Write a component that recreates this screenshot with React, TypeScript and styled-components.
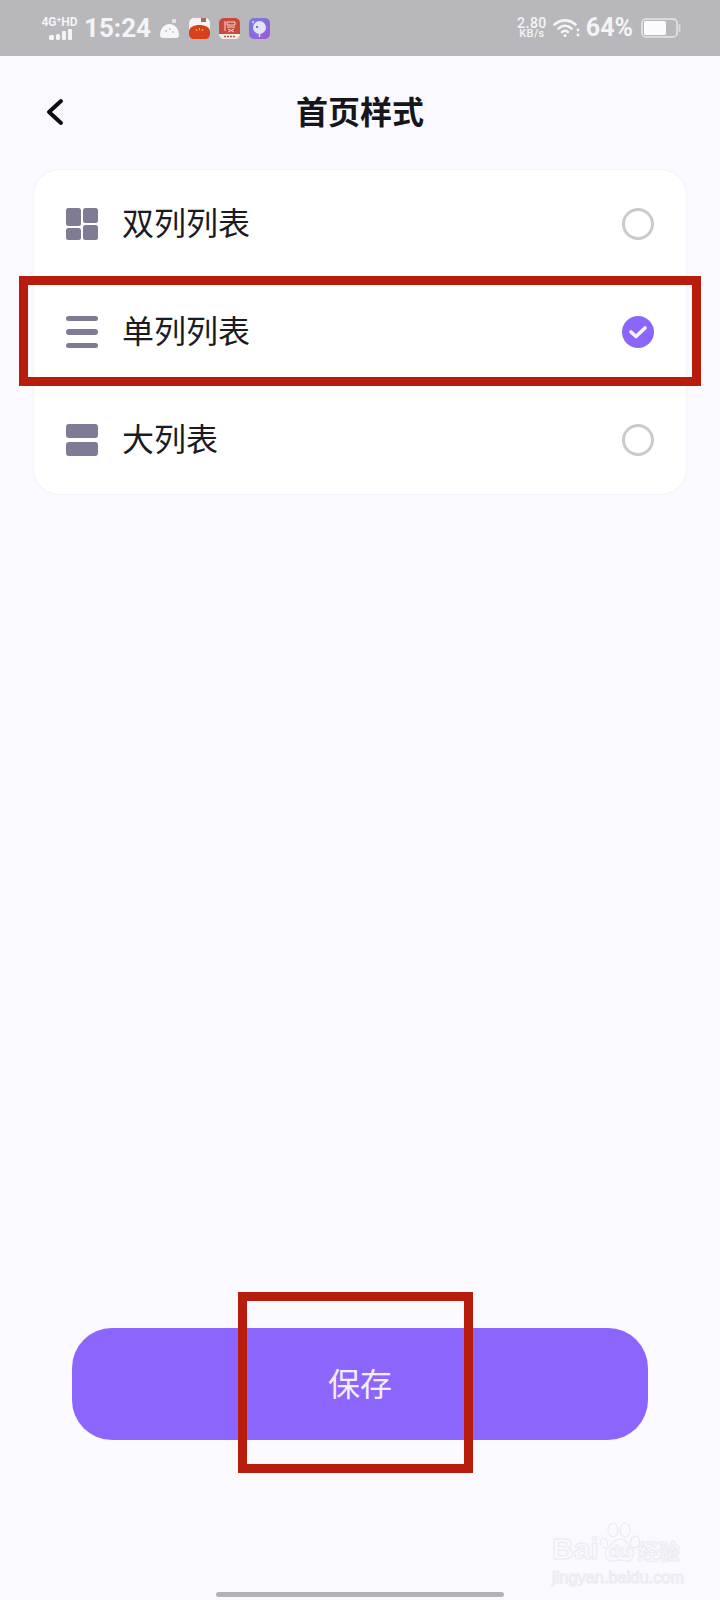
import React from "react";
import styled, { createGlobalStyle } from "styled-components";

const GlobalStyle = createGlobalStyle`
  html, body {
    margin: 0;
    padding: 0;
    background: #faf9ff;
  }
  * {
    box-sizing: border-box;
  }
`;

const Page = styled.div`
  position: relative;
  width: 720px;
  height: 1600px;
  display: flex;
  flex-direction: column;
  overflow: hidden;
  background: #faf9ff;
  font-family: "Noto Sans CJK SC", "Noto Sans", sans-serif;
`;

const StatusBar = styled.div`
  height: 56px;
  flex-shrink: 0;
  display: flex;
  align-items: center;
  justify-content: space-between;
  padding: 0 39px 0 41px;
  background: #b8b7bc;
  color: #f4f4f6;
  font-family: Roboto, "Liberation Sans", sans-serif;
`;

const StatusGroup = styled.div`
  display: flex;
  align-items: center;
`;

const NetworkBlock = styled.div`
  width: 37px;
  display: flex;
  flex-direction: column;
  align-items: center;
  gap: 1px;
  font-size: 12px;
  line-height: 11px;
  font-weight: 700;
  white-space: nowrap;

  svg {
    margin-left: 3px;
  }
`;

const Time = styled.span`
  margin-left: 6px;
  font-size: 26px;
  line-height: 30px;
  font-weight: 700;
`;

const AppIcons = styled.div`
  display: flex;
  gap: 9px;
  margin-left: 8px;
`;

const Speed = styled.div`
  display: flex;
  flex-direction: column;
  align-items: center;
  font-size: 14px;
  line-height: 12px;
  font-weight: 500;
  letter-spacing: 0.5px;
`;

const SpeedUnit = styled.span`
  font-size: 11px;
  line-height: 10px;
  letter-spacing: 0.4px;
`;

const StatusIcon = styled.span<{ $gap: number }>`
  display: flex;
  margin-left: ${(p) => p.$gap}px;
`;

const Percent = styled.span`
  margin-left: 5px;
  font-size: 25px;
  line-height: 26px;
  font-weight: 700;
`;

const Header = styled.header`
  position: relative;
  height: 114px;
  flex-shrink: 0;
  display: flex;
  align-items: center;
  justify-content: center;
  padding-bottom: 7px;
`;

const BackButton = styled.div`
  position: absolute;
  left: 46px;
  top: 42px;
  width: 18px;
  height: 28px;
`;

const Title = styled.h1`
  margin: 0;
  font-size: 32px;
  line-height: 44px;
  font-weight: 700;
  color: #15151a;
`;

const Card = styled.div`
  margin: 0 34px;
  border-radius: 26px;
  background: #fff;
  box-shadow: 0 0 2px rgba(120, 115, 160, 0.12);
`;

const Row = styled.div`
  position: relative;
  height: 108px;
  display: flex;
  align-items: center;
  padding: 0 32px;
`;

const RowLabel = styled.span`
  flex: 1;
  margin-left: 24px;
  padding-bottom: 7px;
  font-size: 32px;
  line-height: 44px;
  color: #1b1b22;
`;

const Radio = styled.span<{ $checked?: boolean }>`
  width: 32px;
  height: 32px;
  border-radius: 50%;
  display: flex;
  align-items: center;
  justify-content: center;
  border: ${(p) => (p.$checked ? "none" : "3px solid #c9c9ce")};
  background: ${(p) => (p.$checked ? "#8c66fc" : "transparent")};
`;

const Callout = styled.div<{ $top: number; $right: number; $bottom: number; $left: number }>`
  position: absolute;
  top: ${(p) => p.$top}px;
  right: ${(p) => p.$right}px;
  bottom: ${(p) => p.$bottom}px;
  left: ${(p) => p.$left}px;
  border: 9px solid #b81c0c;
  pointer-events: none;
`;

const SaveButton = styled.div`
  position: relative;
  height: 112px;
  margin: auto 72px 0;
  padding-bottom: 4px;
  border-radius: 40px;
  display: flex;
  align-items: center;
  justify-content: center;
  background: #8c66fc;
  color: #f4efff;
  font-size: 32px;
  line-height: 44px;
`;

const Footer = styled.div`
  height: 160px;
  flex-shrink: 0;
  display: flex;
  align-items: flex-end;
  justify-content: center;
  padding-bottom: 3px;
`;

const HomeBar = styled.div`
  width: 288px;
  height: 5px;
  border-radius: 3px;
  background: #b2b2b8;
`;

const Watermark = styled.div`
  position: absolute;
  left: 552px;
  top: 1522px;
  width: 134px;
  color: transparent;
  -webkit-text-stroke: 1px #ebebf0;
  font-family: "Liberation Sans", sans-serif;
`;

const MarkTop = styled.div`
  display: flex;
  align-items: flex-end;
  height: 42px;
  font-size: 30px;
  line-height: 30px;
  font-weight: 700;
`;

const MarkCjk = styled.span`
  margin-left: -3px;
  font-family: "Noto Sans CJK SC", sans-serif;
  font-size: 21px;
  line-height: 28px;
`;

const MarkUrl = styled.div`
  margin-top: 4px;
  font-size: 16.4px;
  line-height: 18px;
  white-space: nowrap;
`;

const SignalBars = () => (
  <svg width="24" height="11" viewBox="0 0 24 11" fill="#f4f4f6">
    <rect x="0" y="6" width="5" height="5" rx="1.500" />
    <rect x="7" y="5" width="4" height="6" rx="1.500" />
    <rect x="13" y="2" width="4" height="9" rx="1" />
    <rect x="19" y="0" width="4" height="11" rx="1" />
  </svg>
);

const AppCloud = () => (
  <svg width="21" height="21" viewBox="0 0 21 21">
    <rect x="13" y="1" width="4" height="4" rx="1" fill="#e4e4e8" />
    <path d="M1 17c0-6 4-11 9.500-11S20 11 20 17c0 2-1 3-3 3H4c-2 0-3-1-3-3z" fill="#f6f6f8" />
    <circle cx="7" cy="13" r="1" fill="#c4c4ca" />
    <circle cx="11" cy="11" r="1" fill="#c4c4ca" />
    <circle cx="14" cy="14" r="1" fill="#c4c4ca" />
  </svg>
);

const AppTomato = () => (
  <svg width="21" height="21" viewBox="0 0 21 21">
    <rect width="21" height="21" rx="5" fill="#f7f3f0" />
    <rect x="12" y="0" width="5" height="4" fill="#a9655c" />
    <path d="M0 14c0-5 5-7 10.500-7S21 9 21 14v2c0 3-2 5-5 5H5c-3 0-5-2-5-5z" fill="#d6401a" />
    <path d="M7 11l1 2M10.500 10v2M14 11l-1 2" stroke="#f5c15a" strokeWidth="1" />
  </svg>
);

const AppRed = () => (
  <svg width="21" height="21" viewBox="0 0 21 21">
    <rect width="21" height="21" rx="5" fill="#c9493a" />
    <path d="M0 16h21v0c0 3-2 5-5 5H5c-3 0-5-2-5-5z" fill="#f6ece8" />
    <path d="M6 3v10M8 4h8v3H8zM8 9h8M9 11l6 3M15 11l-6 3" stroke="#f6d9d2" strokeWidth="1" fill="none" />
    <path d="M5 18.500h11" stroke="#b05a4c" strokeWidth="1.500" strokeDasharray="2 1" />
  </svg>
);

const AppPurple = () => (
  <svg width="21" height="21" viewBox="0 0 21 21">
    <defs>
      <linearGradient id="appPurple" x1="0" y1="0" x2="1" y2="1">
        <stop offset="0" stopColor="#6f7fe0" />
        <stop offset="1" stopColor="#a256d8" />
      </linearGradient>
    </defs>
    <rect width="21" height="21" rx="5" fill="url(#appPurple)" />
    <circle cx="10.500" cy="9.500" r="6.500" fill="#e4e2f6" />
    <path d="M10.500 16v3" stroke="#e4e2f6" strokeWidth="1.500" />
    <circle cx="8" cy="9" r="1" fill="#5a4aa8" />
    <circle cx="4" cy="4" r="1" fill="#e4e2f6" />
  </svg>
);

const WifiIcon = () => (
  <svg width="28" height="20" viewBox="0 0 28 20" fill="none" stroke="#f4f4f6" strokeWidth="2.600" strokeLinecap="round">
    <path d="M1.500 6.500C8 1 16 1 22.500 6.500" />
    <path d="M5.500 10.500C9.500 7 14.500 7 18.500 10.500" />
    <path d="M9 14c2-1.700 4-1.700 6 0" />
    <circle cx="12" cy="17.500" r="1.500" fill="#f4f4f6" stroke="none" />
    <circle cx="25" cy="12" r="1.400" fill="#f4f4f6" stroke="none" />
    <circle cx="25" cy="17" r="1.400" fill="#f4f4f6" stroke="none" />
  </svg>
);

const BatteryIcon = () => (
  <svg width="40" height="20" viewBox="0 0 40 20">
    <rect x="1" y="1" width="35" height="18" rx="4" fill="none" stroke="#e6e6ea" strokeWidth="1.500" />
    <rect x="3" y="3" width="22" height="14" rx="1.500" fill="#fbfbfc" />
    <rect x="37.500" y="6" width="2" height="8" rx="1" fill="#dcdce0" />
  </svg>
);

const ChevronLeft = () => (
  <svg width="18" height="28" viewBox="0 0 18 28" fill="none" stroke="#0c0c10" strokeWidth="4" strokeLinecap="round" strokeLinejoin="round">
    <path d="M15 3L3 14l12 11" />
  </svg>
);

const GridIcon = () => (
  <svg width="32" height="32" viewBox="0 0 32 32" fill="#7f7b94">
    <rect x="0" y="0" width="15" height="18" rx="2.500" />
    <rect x="17" y="0" width="15" height="15" rx="2.500" />
    <rect x="0" y="20" width="15" height="12" rx="2.500" />
    <rect x="17" y="17" width="15" height="15" rx="2.500" />
  </svg>
);

const LinesIcon = () => (
  <svg width="32" height="32" viewBox="0 0 32 32" fill="#7f7b94">
    <rect x="0" y="0" width="32" height="5" rx="2.500" />
    <rect x="0" y="13" width="32" height="6" rx="3" />
    <rect x="0" y="27" width="32" height="5" rx="2.500" />
  </svg>
);

const BlocksIcon = () => (
  <svg width="32" height="32" viewBox="0 0 32 32" fill="#7f7b94">
    <rect x="0" y="0" width="32" height="14" rx="3" />
    <rect x="0" y="18" width="32" height="14" rx="3" />
  </svg>
);

const CheckMark = () => (
  <svg width="20" height="16" viewBox="0 0 20 16" fill="none" stroke="#f7f3ff" strokeWidth="3.600" strokeLinecap="round" strokeLinejoin="round">
    <path d="M3 8l5 4.500L17 4" />
  </svg>
);

const PawMark = () => (
  <svg width="42" height="42" viewBox="0 0 42 42" fill="none" stroke="#ebebf0" strokeWidth="1.200">
    <ellipse cx="5" cy="21" rx="3.500" ry="5" transform="rotate(-15 5 21)" />
    <ellipse cx="14" cy="8" rx="5" ry="7" />
    <ellipse cx="26" cy="8" rx="5" ry="7" />
    <ellipse cx="36" cy="20" rx="4.500" ry="6" transform="rotate(15 36 20)" />
    <path d="M21 17c-6 0-8 5-13 10-4 5 0 13 6 12 4-1 9-1 13 0 6 1 10-7 6-12-5-5-6-10-12-10z" />
    <text x="10" y="35" fontFamily="'Liberation Sans', sans-serif" fontWeight="700" fontSize="17" strokeWidth="0.800">
      du
    </text>
  </svg>
);

const options = [
  { label: "双列列表", icon: <GridIcon />, checked: false },
  { label: "单列列表", icon: <LinesIcon />, checked: true },
  { label: "大列表", icon: <BlocksIcon />, checked: false },
];

const App = () => {
  return (
    <Page>
      <GlobalStyle />
      <StatusBar>
        <StatusGroup>
          <NetworkBlock>
            <span>4G⁺HD</span>
            <SignalBars />
          </NetworkBlock>
          <Time>15:24</Time>
          <AppIcons>
            <AppCloud />
            <AppTomato />
            <AppRed />
            <AppPurple />
          </AppIcons>
        </StatusGroup>
        <StatusGroup>
          <Speed>
            <span>2.80</span>
            <SpeedUnit>KB/s</SpeedUnit>
          </Speed>
          <StatusIcon $gap={6}>
            <WifiIcon />
          </StatusIcon>
          <Percent>64%</Percent>
          <StatusIcon $gap={8}>
            <BatteryIcon />
          </StatusIcon>
        </StatusGroup>
      </StatusBar>

      <Header>
        <BackButton>
          <ChevronLeft />
        </BackButton>
        <Title>首页样式</Title>
      </Header>

      <Card>
        {options.map((option) => (
          <Row key={option.label}>
            {option.icon}
            <RowLabel>{option.label}</RowLabel>
            <Radio $checked={option.checked}>{option.checked && <CheckMark />}</Radio>
            {option.checked && <Callout $top={-2} $right={-15} $bottom={0} $left={-15} />}
          </Row>
        ))}
      </Card>

      <SaveButton>
        保存
        <Callout $top={-36} $right={175} $bottom={-33} $left={166} />
      </SaveButton>

      <Footer>
        <HomeBar />
      </Footer>

      <Watermark>
        <MarkTop>
          Bai
          <PawMark />
          <MarkCjk>经验</MarkCjk>
        </MarkTop>
        <MarkUrl>jingyan.baidu.com</MarkUrl>
      </Watermark>
    </Page>
  );
};

export default App;
